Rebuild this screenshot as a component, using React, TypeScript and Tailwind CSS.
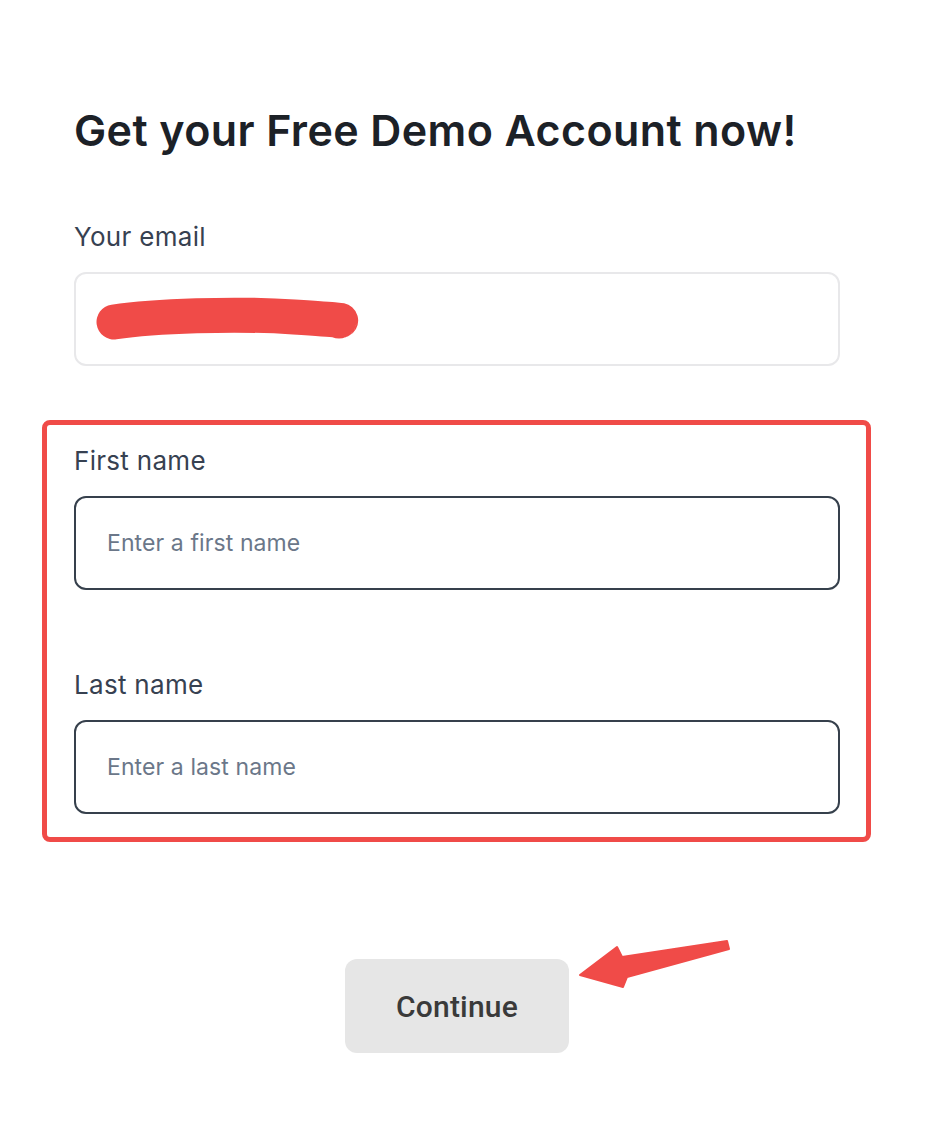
import React from "react";

function Field({ label, placeholder }: { label: string; placeholder: string }) {
    return (
        <div className="flex flex-col">
            <label className="text-[26px] leading-[32px] tracking-[0.3px] text-[#374151]">{label}</label>
            <div className="mt-[19px] flex h-[94px] items-center rounded-[12px] border-2 border-[#36404c] pl-[31px]">
                <span className="text-[23px] tracking-[0.1px] text-[#6b7789]">{placeholder}</span>
            </div>
        </div>
    );
}

export default function App() {
    return (
        <div className="relative h-[1142px] w-[926px] overflow-hidden bg-white font-['Inter',sans-serif]">
            <div className="flex flex-col pt-[104px]">
                <h1 className="pl-[74px] text-[43px] font-semibold leading-[52px] tracking-[0.4px] text-[#1c2127]">
                    Get your Free Demo Account now!
                </h1>

                <div className="mt-[65px] flex w-[840px] flex-col pl-[74px]">
                    <label className="text-[26px] leading-[32px] tracking-[0.3px] text-[#374151]">Your email</label>
                    <div className="relative mt-[19px] h-[94px] rounded-[12px] border-2 border-[#e8e8ea]">
                        {/* redacted email scribble */}
                        <svg className="absolute left-[18px] top-[22px]" width="270" height="50" viewBox="0 0 270 50">
                            <path d="M20 26 C 60 20, 140 17, 200 21 S 245 24, 245 25" stroke="#f04b48" strokeWidth="35" strokeLinecap="round" fill="none" />
                        </svg>
                    </div>
                </div>

                <div className="ml-[42px] mt-[54px] flex w-[829px] flex-col gap-[79px] rounded-[8px] border-[5px] border-[#f04b48] pb-[23px] pl-[27px] pr-[26px] pt-[20px]">
                    <Field label="First name" placeholder="Enter a first name" />
                    <Field label="Last name" placeholder="Enter a last name" />
                </div>

                <div className="mt-[117px] flex w-[840px] justify-center pl-[74px]">
                    <button
                        type="button"
                        className="h-[94px] w-[224px] rounded-[12px] bg-[#e6e6e6] font-['Roboto',sans-serif] text-[30px] font-medium tracking-[0.2px] text-[#3a3a3a]"
                    >
                        Continue
                    </button>
                </div>
            </div>

            {/* annotation arrow */}
            <svg className="absolute left-0 top-0" width="926" height="1142" viewBox="0 0 926 1142">
                <polygon
                    points="580,975 617,947 622,957 727,941 729,949 627,977 623,987"
                    fill="#f04b48"
                    stroke="#f04b48"
                    strokeWidth="2"
                    strokeLinejoin="round"
                />
            </svg>
        </div>
    );
}
